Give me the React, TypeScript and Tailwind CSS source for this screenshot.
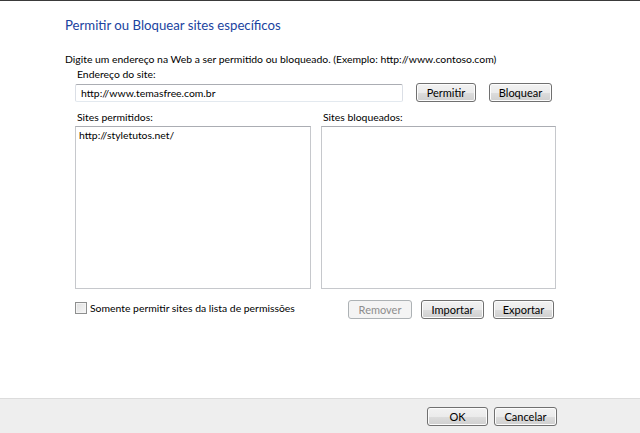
import React, { useState } from 'react';

const font = { fontFamily: 'Lato, "Noto Sans", sans-serif' };

function WinButton({ label, disabled = false, width = 'w-[62px]' }: { label: string; disabled?: boolean; width?: string }) {
  return (
    <button
      disabled={disabled}
      className={
        width +
        ' h-[19px] rounded-[3px] border text-[11px] leading-none flex items-center justify-center ' +
        (disabled
          ? 'border-[#adb2b5] bg-[#f4f4f4] text-[#8d8d8d]'
          : 'border-[#707070] bg-[linear-gradient(to_bottom,#f2f2f2_0%,#ebebeb_50%,#dddddd_51%,#cfcfcf_100%)] text-black shadow-[inset_0_0_0_1px_#fcfcfc]')
      }
    >
      {label}
    </button>
  );
}

export default function App() {
  const [address, setAddress] = useState('http://www.temasfree.com.br');
  const [onlyAllowed, setOnlyAllowed] = useState(false);

  return (
    <div style={font} className="w-[640px] h-[433px] bg-white border-t border-[#3a3a3a] flex flex-col text-black text-[10.4px]">
      <div className="flex-1 pl-[65px] pt-[14px]">
        <h1 className="text-[13.2px] leading-[20px] text-[#1a43a0]">Permitir ou Bloquear sites específicos</h1>

        <p className="mt-[16px] leading-[16px]">
          Digite um endereço na Web a ser permitido ou bloqueado. (Exemplo: http://www.contoso.com)
        </p>

        <div className="pl-[10px]">
          <label className="block pl-[2px] leading-[15px]">Endereço do site:</label>
          <div className="flex items-center mt-[1px]">
            <input
              value={address}
              onChange={(e) => setAddress(e.target.value)}
              className="w-[328px] h-[18px] rounded-[2px] border border-[#abadb3] border-l-[#dbdfe6] border-r-[#dbdfe6] border-b-[#e3e9ef] px-[5px] text-[10.4px] text-black outline-none"
            />
            <div className="ml-[13px]">
              <WinButton label="Permitir" width="w-[60px]" />
            </div>
            <div className="ml-[13px]">
              <WinButton label="Bloquear" width="w-[63px]" />
            </div>
          </div>

          <div className="flex mt-[8px] gap-[10px]">
            <div className="flex flex-col">
              <span className="pl-[2px] leading-[15px]">Sites permitidos:</span>
              <div className="mt-[1px] w-[236px] h-[163px] border border-[#c6c8cc] border-t-[#abadb3] px-[3px] py-[1px] leading-[15px]">
                http://styletutos.net/
              </div>
            </div>
            <div className="flex flex-col">
              <span className="pl-[2px] leading-[15px]">Sites bloqueados:</span>
              <div className="mt-[1px] w-[235px] h-[163px] border border-[#c6c8cc] border-t-[#abadb3]" />
            </div>
          </div>

          <div className="flex items-center mt-[11px]">
            <label className="flex items-center gap-[3px] w-[273px] -mt-[3px]">
              <span
                onClick={() => setOnlyAllowed(!onlyAllowed)}
                className="w-[12px] h-[12px] border border-[#8e8f8f] bg-[linear-gradient(135deg,#e0e0e0,#f6f6f6)] shadow-[inset_0_0_0_1px_#f4f4f4] flex items-center justify-center text-[9px] leading-none"
              >
                {onlyAllowed ? '✓' : ''}
              </span>
              <span className="leading-[15px]">Somente permitir sites da lista de permissões</span>
            </label>
            <WinButton label="Remover" disabled width="w-[64px]" />
            <div className="ml-[9px]">
              <WinButton label="Importar" width="w-[63px]" />
            </div>
            <div className="ml-[9px]">
              <WinButton label="Exportar" width="w-[61px]" />
            </div>
          </div>
        </div>
      </div>

      <div className="h-[35px] bg-[#eeeeee] border-t border-[#dcdcdc] flex items-center justify-end pr-[83px] gap-[6px]">
        <WinButton label="OK" width="w-[61px]" />
        <WinButton label="Cancelar" width="w-[63px]" />
      </div>
    </div>
  );
}
